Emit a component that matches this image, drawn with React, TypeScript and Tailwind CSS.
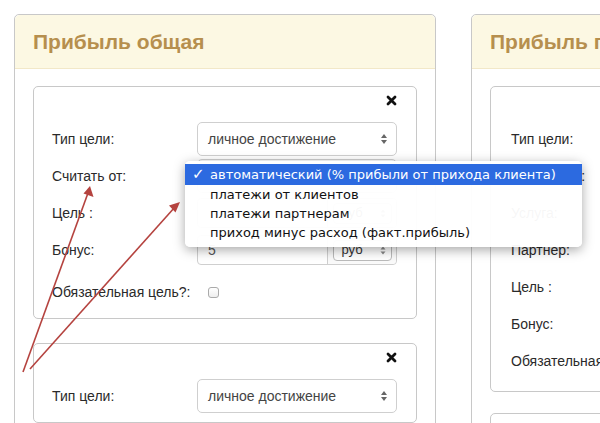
import React from "react";

const font = { fontFamily: '"Liberation Sans", Arial, sans-serif' };

function Arrows() {
  return (
    <svg width="8" height="12" viewBox="0 0 8 12">
      <path d="M4 1 L7 5 L1 5 Z" fill="#666" />
      <path d="M4 11 L7 7 L1 7 Z" fill="#666" />
    </svg>
  );
}

function Close() {
  return (
    <svg width="11" height="11" viewBox="0 0 11 11">
      <path d="M2 2 L9 9 M9 2 L2 9" stroke="#111" strokeWidth="2.8" strokeLinecap="round" />
    </svg>
  );
}

function Select({ text }: { text: string }) {
  return (
    <div className="w-[200px] h-[34px] border border-[#cfcfcf] rounded-[5px] bg-white flex items-center justify-between pl-[10px] pr-[8px] text-[14px] text-[#444]">
      <span>{text}</span>
      <Arrows />
    </div>
  );
}

function InputGroup({ value }: { value: string }) {
  return (
    <div className="w-[200px] h-[30px] border border-[#cfcfcf] rounded-[4px] bg-white flex text-[14px] text-[#555]">
      <div className="w-[130px] flex items-center pl-[10px] border-r border-[#cfcfcf]">{value}</div>
      <div className="flex-1 flex items-center justify-center bg-[#fafafa] rounded-r-[4px]">
        <div className="w-[59px] h-[21px] border border-[#bbb] rounded-[4px] bg-white flex items-center justify-between pl-[8px] pr-[5px] text-[13px] text-[#333]">
          <span>руб</span>
          <svg width="6" height="9" viewBox="0 0 6 9">
            <path d="M3 0.5 L5.5 3.5 L0.5 3.5 Z" fill="#888" />
            <path d="M3 8.5 L5.5 5.5 L0.5 5.5 Z" fill="#888" />
          </svg>
        </div>
      </div>
    </div>
  );
}

function Row({ label, children }: { label: string; children?: React.ReactNode }) {
  return (
    <div className="h-[34px] flex items-center">
      <div className="w-[145px] shrink-0 text-[14px] text-[#2a2a2a] whitespace-nowrap">{label}</div>
      {children}
    </div>
  );
}

function Checkbox() {
  return <div className="ml-[11px] w-[11px] h-[11px] border border-[#aaa] rounded-[3px] bg-gradient-to-b from-white to-[#eee]" />;
}

function LeftCard({ full }: { full?: boolean }) {
  return (
    <div className="border border-[#c8c8c8] rounded-[5px] bg-white pl-[18px] pr-[19px] pt-[8px] pb-[9px]">
      <div className="h-[12px] flex justify-end">
        <Close />
      </div>
      <div className="mt-[15px] flex flex-col gap-[3px]">
        <Row label="Тип цели:">
          <Select text="личное достижение" />
        </Row>
        {full && (
          <>
            <Row label="Считать от:">
              <Select text="автоматический" />
            </Row>
            <Row label="Цель :">
              <InputGroup value="" />
            </Row>
            <Row label="Бонус:">
              <InputGroup value="5" />
            </Row>
            <div className="mt-[5px]">
              <Row label="Обязательная цель?:">
                <Checkbox />
              </Row>
            </div>
          </>
        )}
      </div>
    </div>
  );
}

function RightCard() {
  return (
    <div className="border border-[#c8c8c8] rounded-[5px] bg-white pl-[20px] pt-[8px] pb-[13px]">
      <div className="h-[12px]" />
      <div className="mt-[15px] flex flex-col gap-[3px]">
        <Row label="Тип цели:" />
        <Row label="Считать от:" />
        <Row label="Услуга:" />
        <Row label="Партнер:" />
        <Row label="Цель :" />
        <Row label="Бонус:" />
        <Row label="Обязательная цель?:" />
      </div>
    </div>
  );
}

function Panel({ title, children }: { title: string; children: React.ReactNode }) {
  return (
    <div className="w-[422px] shrink-0 border border-[#c8c8c8] rounded-[5px] bg-white">
      <div className="h-[54px] bg-[#fcf8e3] border-b border-[#f2e8c8] rounded-t-[5px] flex items-center pl-[18px]">
        <span className="text-[21px] font-bold text-[#b68f4e] whitespace-nowrap">{title}</span>
      </div>
      <div className="px-[18px] pt-[17px]">{children}</div>
    </div>
  );
}

export default function App() {
  const items = [
    "платежи от клиентов",
    "платежи партнерам",
    "приход минус расход (факт.прибыль)",
  ];
  return (
    <div className="relative w-[600px] h-[423px] overflow-hidden bg-white" style={font}>
      <div className="flex gap-[35px] pl-[14px] pt-[14px]">
        <Panel title="Прибыль общая">
          <LeftCard full />
          <div className="mt-[24px]">
            <LeftCard />
          </div>
        </Panel>
        <Panel title="Прибыль партнера">
          <RightCard />
          <div className="mt-[21px] h-[100px] border border-[#c8c8c8] rounded-[5px]" />
        </Panel>
      </div>

      {/* dropdown menu */}
      <div
        className="absolute left-[185px] top-[161px] w-[397px] rounded-[5px] bg-[rgba(255,255,255,0.96)] shadow-[0_3px_12px_rgba(0,0,0,0.35)] pt-[3px] pb-[5px] text-[13px] text-[#111]"
        style={{ fontFamily: '"DejaVu Sans", "Liberation Sans", sans-serif' }}
      >
        <div className="relative h-[21px] bg-[#2c6ae0] text-white flex items-center pl-[25px] whitespace-nowrap">
          <span className="absolute left-[7px] top-[0px] text-[15px] font-bold leading-[21px]">✓</span>
          автоматический (% прибыли от прихода клиента)
        </div>
        {items.map((t) => (
          <div key={t} className="h-[19px] flex items-center pl-[25px] whitespace-nowrap">
            {t}
          </div>
        ))}
      </div>

      {/* annotation arrows */}
      <svg className="absolute left-0 top-0 pointer-events-none" width="600" height="423">
        <g stroke="#b5433f" strokeWidth="1.6" fill="#b5433f">
          <line x1="23" y1="372" x2="88" y2="193" />
          <path d="M90 186 L93.5 197 L83.5 193.5 Z" stroke="none" />
          <line x1="30" y1="369" x2="175" y2="207" />
          <path d="M180 202 L175.5 212.5 L169 205.5 Z" stroke="none" />
        </g>
      </svg>
    </div>
  );
}
